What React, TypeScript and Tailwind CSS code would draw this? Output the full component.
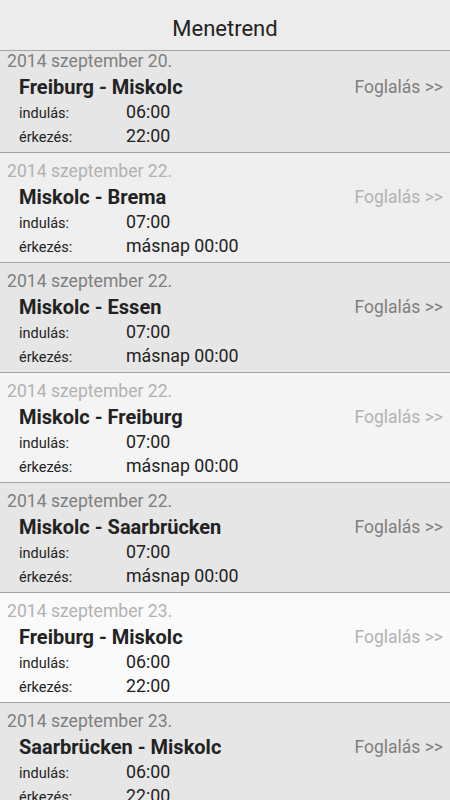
const trips = [
  { date: "2014 szeptember 20.", route: "Freiburg - Miskolc", dep: "06:00", arr: "22:00", bg: "bg-[#e6e6e6]", dim: false },
  { date: "2014 szeptember 22.", route: "Miskolc - Brema", dep: "07:00", arr: "másnap 00:00", bg: "bg-[#efefef]", dim: true },
  { date: "2014 szeptember 22.", route: "Miskolc - Essen", dep: "07:00", arr: "másnap 00:00", bg: "bg-[#e6e6e6]", dim: false },
  { date: "2014 szeptember 22.", route: "Miskolc - Freiburg", dep: "07:00", arr: "másnap 00:00", bg: "bg-[#f4f4f4]", dim: true },
  { date: "2014 szeptember 22.", route: "Miskolc - Saarbrücken", dep: "07:00", arr: "másnap 00:00", bg: "bg-[#e6e6e6]", dim: false },
  { date: "2014 szeptember 23.", route: "Freiburg - Miskolc", dep: "06:00", arr: "22:00", bg: "bg-[#fafafa]", dim: true },
  { date: "2014 szeptember 23.", route: "Saarbrücken - Miskolc", dep: "06:00", arr: "22:00", bg: "bg-[#e6e6e6]", dim: false },
]

function TripRow({ trip }: { trip: (typeof trips)[number] }) {
  const muted = trip.dim ? "text-[#b2b2b2]" : "text-[#7f7f7f]"
  return (
    <div className={`${trip.bg} border-b border-[#a3a3a3] pt-[5px] pb-[4px]`}>
      <div className={`pl-[7px] text-[17.6px] leading-[26px] ${muted}`}>{trip.date}</div>
      <div className="flex h-[26px] items-center justify-between pl-[19px] pr-[7px]">
        <span className="text-[20px] font-bold text-[#222]">{trip.route}</span>
        <span className={`text-[17.5px] ${muted}`}>Foglalás &gt;&gt;</span>
      </div>
      <div className="flex h-[24px] items-baseline pl-[19px] leading-[24px] text-[#222]">
        <span className="w-[107px] text-[14.5px]">indulás:</span>
        <span className="text-[17.8px]">{trip.dep}</span>
      </div>
      <div className="flex h-[24px] items-baseline pl-[19px] leading-[24px] text-[#222]">
        <span className="w-[107px] text-[14.5px]">érkezés:</span>
        <span className="text-[17.8px]">{trip.arr}</span>
      </div>
    </div>
  )
}

export default function App() {
  return (
    <div className="flex h-[800px] w-[450px] flex-col overflow-hidden bg-[#e6e6e6] font-['Roboto',sans-serif]">
      <header className="flex h-[51px] shrink-0 items-center justify-center border-b border-[#a3a3a3] bg-[#ececec] pt-[6px]">
        <h1 className="text-[22px] text-[#222]">Menetrend</h1>
      </header>
      <div className="flex-1 overflow-hidden">
        <div className="-mt-2">
          {trips.map((t, i) => (
            <TripRow key={i} trip={t} />
          ))}
        </div>
      </div>
    </div>
  )
}
